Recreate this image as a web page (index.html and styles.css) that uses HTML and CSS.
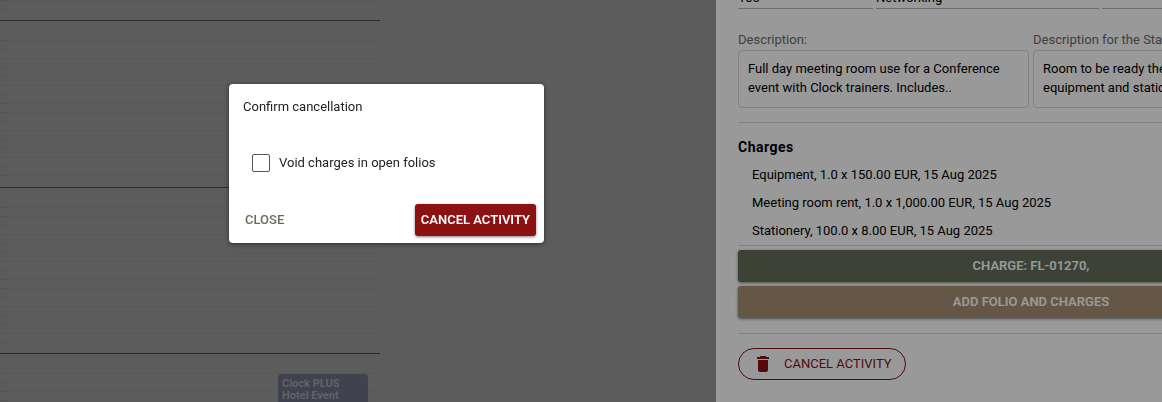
FILE: index.html
```html
<!DOCTYPE html>
<html lang="en">
<head>
<meta charset="utf-8">
<meta name="viewport" content="width=device-width, initial-scale=1">
<title>Confirm cancellation</title>
<link rel="stylesheet" href="styles.css">
</head>
<body>
<div class="app">
  <main class="schedule">
    <div class="calendar">
      <section class="slot"><i></i><i></i><i></i><i></i><i></i><i></i><i></i><i></i><i></i><i></i><i></i><i></i><i></i><i></i><i></i><i></i></section>
      <section class="slot"><i></i><i></i><i></i><i></i><i></i><i></i><i></i><i></i><i></i><i></i><i></i><i></i><i></i><i></i><i></i><i></i></section>
      <section class="slot"><i></i><i></i><i></i><i></i><i></i><i></i><i></i><i></i><i></i><i></i><i></i><i></i><i></i><i></i><i></i><i></i></section>
      <section class="slot"><i></i><i></i><i></i><i></i><i></i><i></i><i></i><i></i><i></i><i></i><i></i><i></i><i></i><i></i><i></i><i></i>
        <div class="event">Clock PLUS<br>Hotel Event</div>
      </section>
    </div>
  </main>
  <aside class="drawer">
    <div class="details">
      <div class="fields">
        <input class="field" type="text" value="100" aria-label="Guests">
        <input class="field" type="text" value="Networking" aria-label="Type">
        <input class="field" type="text" value="" aria-label="Setup">
      </div>
      <div class="notes">
        <div class="note">
          <label class="note-label" for="description">Description:</label>
          <textarea class="note-text" id="description" rows="2">Full day meeting room use for a Conference event with Clock trainers. Includes..</textarea>
        </div>
        <div class="note">
          <label class="note-label" for="staff">Description for the Staff:</label>
          <textarea class="note-text" id="staff" rows="2">Room to be ready the day before,
equipment and stationery included</textarea>
        </div>
      </div>
      <section class="charges">
        <h2 class="heading">Charges</h2>
        <ul class="charge-list">
          <li>Equipment, 1.0 x 150.00 EUR, 15 Aug 2025</li>
          <li>Meeting room rent, 1.0 x 1,000.00 EUR, 15 Aug 2025</li>
          <li>Stationery, 100.0 x 8.00 EUR, 15 Aug 2025</li>
        </ul>
        <div class="charge-actions">
          <button class="btn btn-green" type="button">CHARGE: FL-01270,</button>
          <button class="btn btn-tan" type="button">ADD FOLIO AND CHARGES</button>
        </div>
      </section>
      <footer class="footer">
        <button class="btn-outline" type="button">
          <svg class="trash" viewBox="0 0 14 18" aria-hidden="true"><path fill="currentColor" d="M4 1h6v1h3v2H1V2h3zM2 5h10v10q0 2-2 2H4q-2 0-2-2z"/></svg>
          CANCEL ACTIVITY
        </button>
      </footer>
    </div>
  </aside>
</div>
<div class="backdrop">
  <div class="dialog" role="dialog" aria-modal="true" aria-labelledby="dialog-title">
    <h1 class="dialog-title" id="dialog-title">Confirm cancellation</h1>
    <label class="check"><input class="check-box" type="checkbox"><span>Void charges in open folios</span></label>
    <div class="dialog-actions">
      <button class="btn-text" type="button">CLOSE</button>
      <button class="btn btn-red" type="button">CANCEL ACTIVITY</button>
    </div>
  </div>
</div>
</body>
</html>
```
FILE: styles.css
```css
* { box-sizing: border-box; }
body {
  margin: 0;
  overflow: hidden;
  font: 13px/20px Roboto, "Liberation Sans", sans-serif;
  color: #000;
}
h1, h2, ul { margin: 0; padding: 0; }
button, input, textarea { font: inherit; color: inherit; margin: 0; }

.app {
  display: grid;
  grid-template-columns: minmax(0, 1fr) 446px;
  height: 100vh;
  overflow: hidden;
}

/* Calendar */
.schedule {
  display: flex;
  align-items: flex-start;
  overflow: hidden;
  background: #999;
}
.calendar { width: 380px; margin-top: -145px; }
.slot {
  position: relative;
  padding: 11px 0;
  border-bottom: 1px solid #4a4a4a;
}
.slot:nth-child(odd) { padding-bottom: 10px; }
.slot i {
  display: block;
  height: 9px;
  border-bottom: 1px dotted #8c8c8c;
}
.event {
  position: absolute;
  top: 20px;
  right: 12px;
  width: 90px;
  height: 60px;
  padding: 4px;
  border-radius: 4px;
  background: #6d6e84;
  color: #a3a3aa;
  font-size: 11px;
  font-weight: 700;
  line-height: 12px;
}

/* Activity drawer */
.drawer { overflow: hidden; background: #fff; }
.details { width: 608px; padding-left: 22px; }
.fields {
  display: grid;
  grid-template-columns: 135px 223px 1fr;
  gap: 3px;
  margin-top: -17px;
}
.field {
  width: 100%;
  height: 26px;
  padding: 4px 0 0;
  border: 0;
  border-bottom: 1px solid #b4b4b4;
  background: none;
}
.notes {
  display: grid;
  grid-template-columns: 1fr 1fr;
  gap: 4px;
  padding: 21px 0 14px;
  border-bottom: 1px solid #dadada;
}
.note-label { display: block; color: #6a6a6a; }
.note-text {
  display: block;
  width: 100%;
  height: 58px;
  padding: 8px 9px;
  border: 1px solid #dadada;
  border-radius: 4px;
  background: none;
  line-height: 19px;
  resize: none;
  overflow: hidden;
}
.charges { padding: 14px 0 15px; border-bottom: 1px solid #dadada; }
.heading { font-size: 14px; font-weight: 700; line-height: 20px; letter-spacing: 0.5px; }
.charge-list {
  padding: 4px 0 0 14px;
  list-style: none;
  line-height: 28px;
}
.charge-actions {
  display: grid;
  gap: 4px;
  padding-top: 4px;
  border-top: 1px solid #dadada;
}
.btn {
  height: 32px;
  padding: 0 6px;
  border: 0;
  border-radius: 3px;
  color: #fff;
  font-weight: 600;
  box-shadow: 0 1px 3px rgba(0, 0, 0, .5);
}
.btn-green { background: #656e5b; }
.btn-tan { background: #a89273; }
.btn-red { background: #8b1113; }
.footer { padding-top: 14px; }
.btn-outline {
  display: flex;
  align-items: center;
  gap: 14px;
  height: 32px;
  padding: 0 13px 0 17px;
  border: 1px solid #8b1113;
  border-radius: 16px;
  background: none;
  color: #8b1113;
  font-weight: 400;
}
.trash { width: 14px; height: 18px; }

/* Dialog */
.backdrop {
  position: fixed;
  inset: 0;
  padding: 84px 0 0 229px;
  background: rgba(0, 0, 0, .4);
}
.dialog {
  width: 315px;
  padding: 13px 8px 7px 14px;
  border-radius: 4px;
  background: #fff;
  color: #222;
  box-shadow: 0 1px 5px rgba(0, 0, 0, .5);
}
.dialog-title { font-size: 13px; font-weight: 400; line-height: 20px; }
.check {
  display: flex;
  align-items: center;
  gap: 9px;
  padding: 36px 0 31px 9px;
}
.check-box {
  appearance: none;
  width: 18px;
  height: 18px;
  border: 1px solid #555;
  border-radius: 2px;
}
.dialog-actions { display: flex; align-items: center; justify-content: space-between; }
.btn-text {
  height: 32px;
  padding: 0 2px;
  border: 0;
  background: none;
  color: #656e5b;
  font-weight: 500;
}
```
